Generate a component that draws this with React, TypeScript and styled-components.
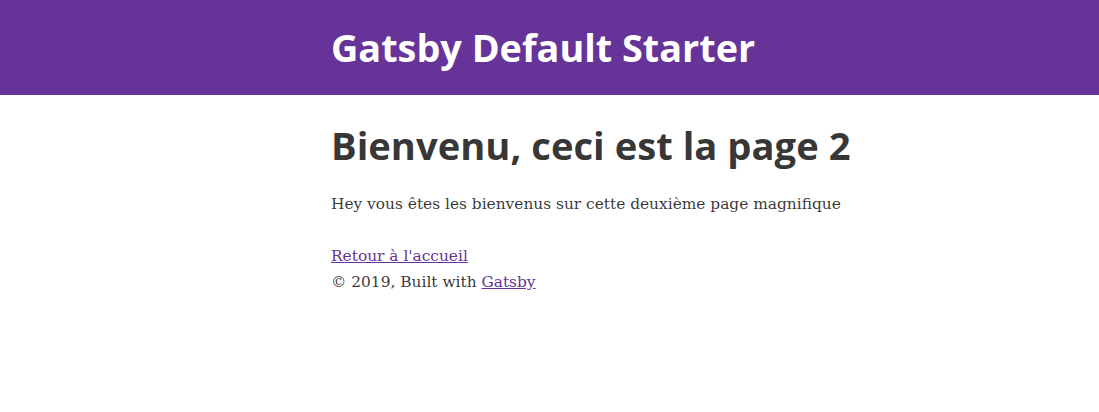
import React from "react";
import styled, { createGlobalStyle } from "styled-components";

const Global = createGlobalStyle`
  html { font: 18px/1.45 "DejaVu Serif", Georgia, serif; }
  body { margin: 0; color: hsla(0, 0%, 0%, 0.8); background: #fff; }
  * { box-sizing: border-box; }
`;

const Header = styled.header`
  background: #663399;
  margin-bottom: 26px;
`;

const Container = styled.div`
  padding: 25px 19.5px 25px 331px;
`;

const SiteTitle = styled.h1`
  margin: 0;
  font-family: "Open Sans", "Noto Sans", sans-serif;
  font-weight: 700;
  font-size: 37.8px;
  line-height: 45px;
  white-space: nowrap;
  a { color: #fff; text-decoration: none; }
`;

const Main = styled.div`
  padding: 0 19.5px 26px 331px;
`;

const Title = styled.h1`
  margin: 0 0 23px;
  font-family: "Open Sans", "Noto Sans", sans-serif;
  font-weight: 700;
  font-size: 38.2px;
  line-height: 45px;
  white-space: nowrap;
  color: hsla(0, 0%, 0%, 0.8);
  padding-top: 2px;
`;

const Text = styled.p`
  margin: 0 0 26px;
  font-size: 15.4px;
  line-height: 26px;
`;

const Link = styled.a`
  color: #663399;
  text-decoration: underline;
`;

const Line = styled.div`
  font-size: 15.4px;
  line-height: 26px;
`;

export default function App() {
  return (
    <>
      <Global />
      <Header>
        <Container>
          <SiteTitle>
            <a href="#">Gatsby Default Starter</a>
          </SiteTitle>
        </Container>
      </Header>
      <Main>
        <main>
          <Title>Bienvenu, ceci est la page 2</Title>
          <Text>Hey vous êtes les bienvenus sur cette deuxième page magnifique</Text>
          <Line>
            <Link href="#">Retour à l'accueil</Link>
          </Line>
        </main>
        <Line as="footer">
          © 2019, Built with <Link href="#">Gatsby</Link>
        </Line>
      </Main>
    </>
  );
}
